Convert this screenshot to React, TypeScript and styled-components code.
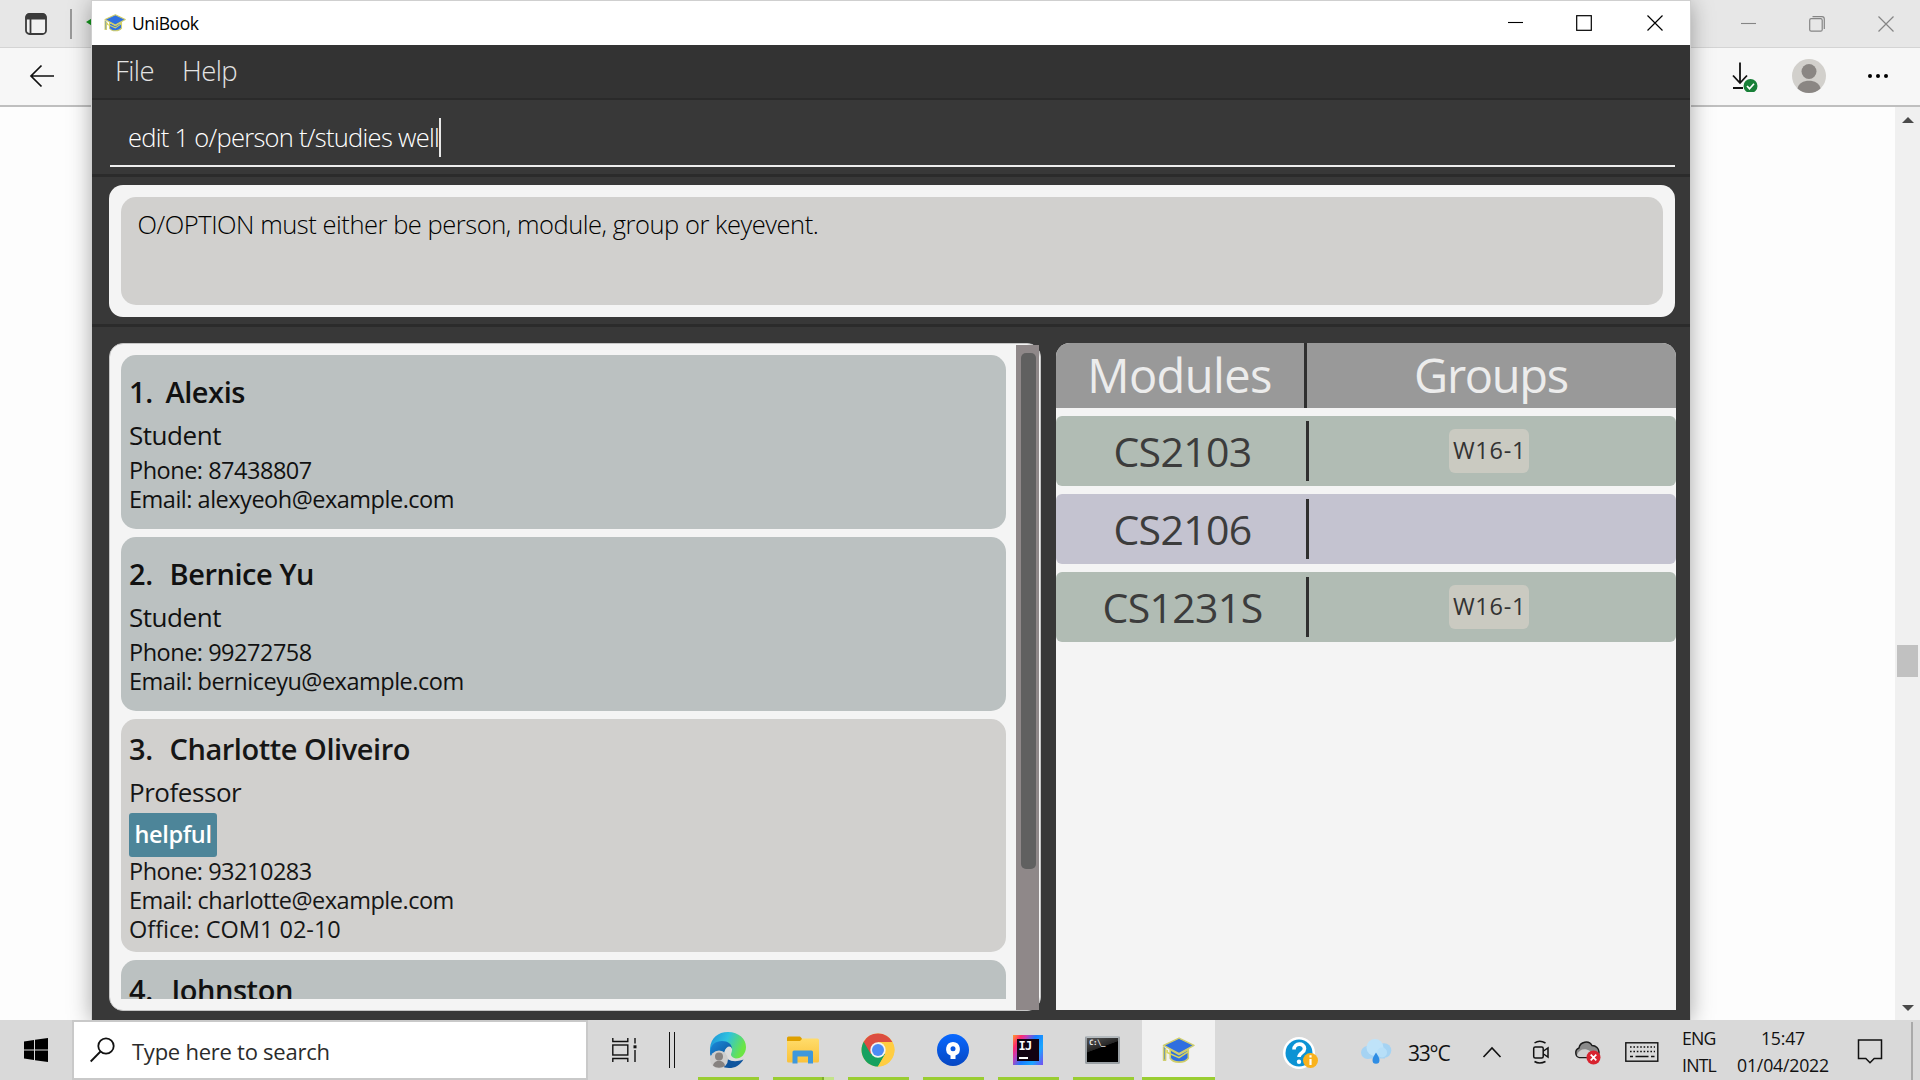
import React from 'react';
import styled, { createGlobalStyle, css } from 'styled-components';

const Global = createGlobalStyle`
  *, *::before, *::after { box-sizing: border-box; }
  html, body { margin: 0; padding: 0; overflow: hidden; }
  body { font-family: 'Open Sans', 'Noto Sans', sans-serif; color: #111; }
  svg { display: block; flex: none; }
`;

const Desktop = styled.div`
  position: relative;
  width: 1920px;
  height: 1080px;
  display: flex;
  flex-direction: column;
  overflow: hidden;
`;

/* ---------- browser behind the window ---------- */

const Browser = styled.div`
  height: 1020px;
  display: flex;
  flex-direction: column;
  background: #fdfdfd;
`;
const BrowserTabs = styled.div`
  height: 48px;
  padding: 0 26px 0 24px;
  display: flex;
  justify-content: space-between;
  align-items: center;
  background: #e7e7e7;
  border-bottom: 1px solid #d4d4d4;
`;
const BrowserTools = styled.div`
  height: 59px;
  padding: 0 31px 2px 29px;
  display: flex;
  justify-content: space-between;
  align-items: center;
  background: #f7f7f7;
  border-bottom: 2px solid #bfbfbf;
`;
const Cluster = styled.div<{ $gap: number }>`
  display: flex;
  align-items: center;
  gap: ${p => p.$gap}px;
`;
const TabDivider = styled.div`
  width: 2px;
  height: 30px;
  background: #999;
`;
const BrowserPage = styled.div`
  flex: 1;
  display: flex;
  justify-content: flex-end;
`;
const PageScroll = styled.div`
  width: 25px;
  padding: 10px 2px 9px;
  display: flex;
  flex-direction: column;
  align-items: center;
  background: #f0f0f0;
`;
const PageThumb = styled.div`
  width: 21px;
  height: 32px;
  margin: 522px 0 auto;
  background: #c1c1c1;
`;

/* ---------- application window ---------- */

const Window = styled.div`
  position: absolute;
  left: 92px;
  top: 1px;
  width: 1598px;
  height: 1019px;
  display: flex;
  flex-direction: column;
  background: #383838;
  box-shadow: 0 0 0 1px #cfcfcf, 0 2px 22px rgba(0, 0, 0, 0.36);
  clip-path: inset(-1px -40px 0 -40px);
`;
const TitleBar = styled.div`
  height: 44px;
  padding: 0 27px 0 12px;
  display: flex;
  align-items: center;
  background: #fff;
`;
const Title = styled.div`
  flex: 1;
  margin-left: 6px;
  font-size: 17.5px;
  line-height: 44px;
  letter-spacing: -0.42px;
  color: #000;
`;
const MenuBar = styled.div`
  height: 55px;
  padding-left: 23px;
  display: flex;
  gap: 28px;
  background: #333;
  border-bottom: 2px solid #2a2a2a;
`;
const MenuItem = styled.div`
  font-size: 27.5px;
  font-weight: 300;
  line-height: 52px;
  letter-spacing: -0.6px;
  color: #e4e4e4;
`;
const CommandArea = styled.div`
  height: 77px;
  padding: 0 15px 0 18px;
  border-bottom: 3px solid #2b2b2b;
`;
const CommandInput = styled.div`
  height: 67px;
  padding: 10px 0 0 18px;
  display: flex;
  align-items: flex-start;
  border-bottom: 2px solid #eee;
  font-size: 25.5px;
  font-weight: 300;
  line-height: 55px;
  letter-spacing: -0.72px;
  color: #fff;
`;
const Caret = styled.div`
  width: 2px;
  height: 39px;
  margin-top: 8px;
  background: #e8e8e8;
`;
const ResultArea = styled.div`
  height: 150px;
  padding: 8px 15px 7px 17px;
  border-bottom: 3px solid #2b2b2b;
`;
const ResultBox = styled.div`
  height: 132px;
  padding: 12px;
  border-radius: 14px;
  background: #f4f4f4;
`;
const ResultText = styled.div`
  height: 108px;
  padding-left: 16.5px;
  border-radius: 15px;
  background: #d1d0ce;
  font-size: 25.5px;
  font-weight: 300;
  line-height: 54px;
  letter-spacing: -0.465px;
  color: #000;
`;
const Content = styled.div`
  flex: 1;
  min-height: 0;
  padding: 16px 14px 9px 17px;
  display: flex;
  gap: 15px;
`;
const ListPanel = styled.div`
  width: 932px;
  height: 668px;
  padding-left: 11px;
  display: flex;
  gap: 10px;
  background: #f4f4f4;
  border: 1px solid #c6c6c6;
  border-radius: 14px;
`;
const ListView = styled.div`
  width: 885px;
  height: 644px;
  margin-top: 11px;
  display: flex;
  flex-direction: column;
  gap: 8px;
  overflow: hidden;
`;
const ListTrack = styled.div`
  width: 23px;
  height: 665px;
  margin-top: 1px;
  padding: 8px 3px 0 5px;
  background: #8f8889;
`;
const ListThumb = styled.div`
  height: 516px;
  border-radius: 5px;
  background: #606060;
`;
const Card = styled.div<{ $kind: 'student' | 'professor' }>`
  flex: none;
  height: ${p => (p.$kind === 'student' ? 174 : 233)}px;
  padding: ${p => (p.$kind === 'student' ? 14 : 7)}px 8px 0;
  border-radius: 15px;
  background: ${p => (p.$kind === 'student' ? '#bbc1c1' : '#d1d0ce')};
  ${p => p.$kind === 'professor' && css`color: #161616;`}
`;
const Name = styled.div`
  display: flex;
  font-size: 29px;
  font-weight: 600;
  line-height: 46px;
  letter-spacing: -0.45px;
`;
const Index = styled.span<{ $width: number }>`
  width: ${p => p.$width}px;
`;
const Role = styled.div`
  font-size: 26px;
  line-height: 41px;
  letter-spacing: -0.45px;
`;
const Line = styled.div<{ $wide: boolean }>`
  font-size: 23.5px;
  line-height: 29px;
  letter-spacing: ${p => (p.$wide ? 0 : -0.49)}px;
`;
const Tag = styled.div`
  width: 88px;
  height: 44px;
  border-radius: 3px;
  background: #4d8599;
  color: #fff;
  font-size: 23.5px;
  font-weight: 600;
  line-height: 43px;
  letter-spacing: -0.35px;
  text-align: center;
`;

const ModulePanel = styled.div`
  width: 620px;
  height: 667px;
  display: flex;
  flex-direction: column;
  gap: 8px;
  background: #f4f4f4;
  border-radius: 14px 14px 0 0;
  overflow: hidden;
`;
const ModuleHeader = styled.div`
  height: 65px;
  display: grid;
  grid-template-columns: 248px 3px 1fr;
  background: #999;
`;
const HeaderCell = styled.div<{ $spacing: number }>`
  padding-right: 1px;
  font-size: 47px;
  line-height: 65px;
  letter-spacing: ${p => p.$spacing}px;
  text-align: center;
  color: #ececec;
  & + & { padding-right: 4px; }
`;
const Rule = styled.div`
  background: #2f2f2f;
`;
const ModuleRow = styled.div<{ $alt?: boolean }>`
  height: 70px;
  display: grid;
  grid-template-columns: 250px 3px 1fr;
  align-items: center;
  border-radius: 6px;
  background: ${p => (p.$alt ? '#c4c3d0' : '#b1bcb4')};
  ${Rule} { height: 60px; }
`;
const ModuleName = styled.div`
  padding-left: 3px;
  font-size: 41px;
  line-height: 70px;
  letter-spacing: -0.65px;
  text-align: center;
  color: #3c3c3c;
`;
const GroupCell = styled.div`
  padding-right: 7px;
  display: flex;
  justify-content: center;
`;
const Group = styled.div`
  width: 80px;
  height: 44px;
  padding-left: 1px;
  border-radius: 6px;
  background: #cacac1;
  font-size: 23.5px;
  line-height: 42px;
  letter-spacing: 0.7px;
  text-align: center;
  color: #333;
`;

/* ---------- taskbar ---------- */

const Taskbar = styled.div`
  position: relative;
  height: 60px;
  display: flex;
  background: #d9d9d9;
`;
const Start = styled.div`
  width: 72px;
  padding: 18px 0 0 24px;
`;
const Search = styled.div`
  width: 516px;
  padding: 0 0 0 16px;
  display: flex;
  gap: 17px;
  background: #fff;
  border: 2px solid #c9c9c9;
  font-size: 22px;
  line-height: 58px;
  letter-spacing: -0.25px;
  color: #2b2b2b;
  svg { margin-top: 15px; }
`;
const TaskTools = styled.div`
  width: 109px;
  padding-left: 24px;
  display: flex;
  align-items: center;
  gap: 32px;
`;
const DoubleBar = styled.div`
  width: 6px;
  height: 36px;
  border: solid #111;
  border-width: 0 1.5px;
`;
const Apps = styled.div`
  display: flex;
  gap: 14px;
  margin-left: 1px;
`;
const AppButton = styled.div<{ $active?: boolean; $stacked?: boolean }>`
  width: ${p => (p.$active ? 73 : 61)}px;
  margin-left: ${p => (p.$active ? -6 : 0)}px;
  height: 60px;
  display: flex;
  align-items: center;
  justify-content: center;
  background: ${p => (p.$active ? '#f1f1f1' : 'transparent')};
  border-bottom: 3px solid #9acd32;
  padding: 3px ${p => (p.$active ? 0 : 2)}px 0 0;
  ${p => p.$stacked && css`
    border-image: linear-gradient(90deg, #9acd32 78%, #7fae2a 78%, #7fae2a 81%, #c3e389 81%) 3;
    border-style: none none solid;
  `}
`;
const Tray = styled.div`
  margin-left: 68px;
  display: grid;
  grid-template-columns: 77px 48px 74px 50px 42px 51px 57px 53px 122px 54px 8px;
  align-items: center;
  font-size: 18px;
  color: #111;
`;
const Temp = styled.div`
  padding-top: 2px;
  font-size: 21px;
  line-height: 62px;
  letter-spacing: -1.2px;
`;
const TwoLine = styled.div<{ $width?: number; $spacing: number }>`
  width: ${p => (p.$width ? p.$width + 'px' : 'auto')};
  font-size: 17.7px;
  line-height: 27.5px;
  letter-spacing: ${p => p.$spacing}px;
  text-align: ${p => (p.$width ? 'center' : 'left')};
  white-space: nowrap;
`;
const PeekLine = styled.div`
  width: 2px;
  height: 60px;
  background: #a9a9a9;
`;

/* ---------- drawings ---------- */

const Cap = ({ w, h }: { w: number; h: number }) => (
  <svg width={w} height={h} viewBox="0 0 32 26">
    <g fill="#2f6fe0" stroke="#d0ce6c" strokeWidth="1.500" strokeLinejoin="round">
      <path d="M8 12v8.500c3 5 14 5 17.500 0V12l-9 5z" />
      <path d="M1.500 9v13.500h2V11" />
      <path d="M16.500 1 1.500 8l15 8L31 8z" />
    </g>
    <path d="M5 12.500v2.500l11.500 5 9-6" fill="none" stroke="#d8d65c" strokeWidth="1.500" />
  </svg>
);

const Cross = ({ c }: { c: string }) => (
  <svg width="16" height="16" viewBox="0 0 16 16" stroke={c} strokeWidth="1.200"><path d="M.5.5l15 15M15.500.5l-15 15" /></svg>
);
const Dash = ({ c }: { c: string }) => (
  <svg width="15" height="16" viewBox="0 0 15 16"><path d="M0 7.500h15" stroke={c} strokeWidth="1.100" /></svg>
);

const TabsIcon = () => (
  <svg width="24" height="24" viewBox="0 0 24 24">
    <rect x="2" y="2" width="20" height="20" rx="3.500" fill="#f2f2f2" stroke="#3b3b3b" strokeWidth="1.800" />
    <path d="M1.500 7.500V5a3.500 3.500 0 0 1 3.500-3.500h14A3.500 3.500 0 0 1 22.500 5v2.500z" fill="#3b3b3b" />
    <path d="M6.500 7v15" stroke="#3b3b3b" strokeWidth="1.800" />
  </svg>
);
const BackIcon = () => (
  <svg width="26" height="24" viewBox="0 0 26 24" fill="none" stroke="#111" strokeWidth="1.700"><path d="M25 12H2M12.500 1.500 2 12l10.500 10.500" /></svg>
);
const RestoreIcon = () => (
  <svg width="16" height="16" viewBox="0 0 16 16" fill="none" stroke="#858585" strokeWidth="1.200"><rect x=".7" y="2.700" width="12.500" height="12.500" rx="1.500" /><path d="M3.500.7h9.500a2.300 2.300 0 0 1 2.300 2.300v10" /></svg>
);
const DownloadIcon = () => (
  <svg width="26" height="32" viewBox="0 0 26 32" fill="none">
    <path d="M8 2.500v20.500M1 15.500l7 7.500 7-7.500M1 28h10" stroke="#111" strokeWidth="1.800" />
    <circle cx="18.500" cy="26" r="7" fill="#188038" />
    <path d="M15 26l2.500 2.700 4.500-5" stroke="#fff" strokeWidth="1.700" />
  </svg>
);
const Avatar = () => (
  <svg width="36" height="36" viewBox="0 0 36 36">
    <circle cx="18" cy="18" r="17" fill="#d2d0cc" />
    <circle cx="18" cy="13.500" r="7.500" fill="#8a8683" />
    <path d="M6.500 30.500C8 20 28 20 29.500 30.500 23 36.500 13 36.500 6.500 30.500z" fill="#8a8683" />
  </svg>
);
const Dots = () => (
  <svg width="22" height="6" viewBox="0 0 22 6"><circle cx="3" cy="3" r="2" /><circle cx="11" cy="3" r="2" /><circle cx="19" cy="3" r="2" /></svg>
);
const Arrow = ({ down }: { down?: boolean }) => (
  <svg width="12" height="6" viewBox="0 0 12 6"><path d={down ? 'M0 0h12L6 6z' : 'M0 6h12L6 0z'} fill="#4a4a4a" /></svg>
);
const LeafIcon = () => (
  <svg width="8" height="14" viewBox="0 0 8 14"><path d="M0 5 8 0v14H5.500V8.500z" fill="#13951c" /></svg>
);

const EdgeIcon = () => (
  <svg width="38" height="38" viewBox="0 0 38 38">
    <defs>
      <linearGradient id="eg" x1="0" y1="0" x2="1" y2=".35"><stop offset="0" stopColor="#1c8fd8" /><stop offset=".5" stopColor="#2fc2df" /><stop offset="1" stopColor="#6be544" /></linearGradient>
      <linearGradient id="eb" x1="0" y1="0" x2="1" y2="1"><stop offset="0" stopColor="#1b8bdc" /><stop offset="1" stopColor="#0b4f94" /></linearGradient>
    </defs>
    <path d="M1 17C2 7 9 1 19 1c11 0 18 7 18 15 0 7-5 12-11 12-4 0-6-2-5-4 3-5-1-11-8-11-6 0-11 5-12 10z" fill="url(#eg)" />
    <path d="M1 23C1 13 7 10 13 10c6 0 10 3 10 8-6-3-9 2-8 10H3z" fill="url(#eb)" />
    <path d="M15 22c2 8 10 10 19.500 6.500C31 34.500 26 37 20 37c-6 0-10-3-11-8z" fill="#0f559d" />
    <path d="M16 20c1-5 6-6 7-2 .5 3-2 5-.5 7 2 3 7 3 10 2-6 4-14 3-16-2z" fill="#dcdcdc" />
    <circle cx="10" cy="28.500" r="9" fill="#cfcecd" />
    <circle cx="10" cy="25.500" r="4" fill="#868280" />
    <path d="M4 34.500c1-6.500 11-6.500 12 0-3 3-9 3-12 0z" fill="#868280" />
  </svg>
);
const FolderIcon = () => (
  <svg width="32" height="28" viewBox="0 0 32 28">
    <defs><linearGradient id="fo" x1="0" y1="0" x2="0" y2="1"><stop offset="0" stopColor="#ffdc6b" /><stop offset="1" stopColor="#fac23a" /></linearGradient></defs>
    <path d="M0 5V2Q0 .5 1.500.5H13l2 2V5z" fill="#dfa000" />
    <path d="M0 5h13l2.500-2.500H30.500Q32 2.500 32 4V25q0 1.500-1.500 1.500h-29Q0 26.500 0 25z" fill="url(#fo)" />
    <path d="M5.500 27.500V16q0-1.500 1.500-1.500h17.500q1.500 0 1.500 1.500v11.500h-5V20.500H10.500v7z" fill="#3e98dc" />
  </svg>
);
const ChromeIcon = () => (
  <svg width="34" height="34" viewBox="0 0 34 34">
    <circle cx="17" cy="17" r="16.500" fill="#ffcd42" />
    <path d="M17 17 2.700 8.800A16.500 16.500 0 0 0 17 33.500l7.200-12.400z" fill="#16a160" />
    <path d="M17 17V9h14.400A16.500 16.500 0 0 0 2.700 8.800L9.800 21z" fill="#dc4e41" />
    <path d="M17 9h14.400a16.500 16.500 0 0 1-14.400 24.500L24.200 21z" fill="#ffcd42" />
    <circle cx="17" cy="17" r="7.700" fill="#f3f3f3" />
    <circle cx="17" cy="17" r="6" fill="#4c8bf5" />
  </svg>
);
const SourcetreeIcon = () => (
  <svg width="32" height="32" viewBox="0 0 32 32">
    <defs><linearGradient id="st" x1="0" y1="0" x2="0" y2="1"><stop offset="0" stopColor="#0868ff" /><stop offset="1" stopColor="#0747c2" /></linearGradient></defs>
    <circle cx="16" cy="16" r="16" fill="url(#st)" />
    <path d="M16 8a7 7 0 0 0-2.500 13.500V25h5v-3.500A7 7 0 0 0 16 8z" fill="#fff" />
    <circle cx="16" cy="14.800" r="2.500" fill="#0a58e0" />
  </svg>
);
const IntelliJBox = styled.div`
  width: 30px;
  height: 30px;
  padding: 4px;
  background: linear-gradient(120deg, #ff9a2e 0, #ff2d6b 18%, #c93bb5 30%, #1a7cff 50%, #19a6ff 75%, #7a4cf0 100%);
`;
const IntelliJInner = styled.div`
  width: 22px;
  height: 22px;
  padding: 1px 0 0 2px;
  background: #120312;
  color: #fff;
  font: 700 12px/13px 'DejaVu Sans Mono', monospace;
  letter-spacing: -0.8px;
  &::after {
    content: '';
    display: block;
    width: 9px;
    height: 2px;
    margin-top: 4px;
    background: #fff;
  }
`;
const Terminal = styled.div`
  width: 35px;
  height: 28px;
  padding: 1px 0 0 2px;
  border: 2px solid #9aa0a4;
  border-top-color: #b4babe;
  border-radius: 2px;
  background: linear-gradient(160deg, #555 0, #262626 40%, #000 42%);
  color: #e8e8e8;
  font: 700 7.500px/8px 'DejaVu Sans Mono', monospace;
  letter-spacing: -0.5px;
`;

const HelpIcon = () => (
  <svg width="36" height="40" viewBox="0 0 36 40">
    <circle cx="16" cy="21" r="16" fill="#fff" />
    <circle cx="16" cy="21" r="13.500" fill="#0c93d4" />
    <path d="M11 17.500c0-7 10.500-7 10.500-.8 0 4.300-5.500 4-5.500 8.300" fill="none" stroke="#fff" strokeWidth="3.600" />
    <circle cx="16" cy="29.800" r="2.200" fill="#fff" />
    <circle cx="27.500" cy="28.500" r="7.500" fill="#f9b21d" />
    <path d="M27.500 27v6M27.500 23.300v2.200" stroke="#fff" strokeWidth="2.200" />
  </svg>
);
const WeatherIcon = () => (
  <svg width="32" height="30" viewBox="0 0 32 30">
    <g fill="#a5d3f3">
      <circle cx="7.500" cy="15.500" r="6.500" />
      <circle cx="24" cy="13.500" r="7.300" />
      <path d="M7 13h18v8.500H7z" />
    </g>
    <circle cx="15" cy="10.500" r="8.500" fill="#bfe3f9" />
    <circle cx="22" cy="15.500" r="5" fill="#b7dff8" />
    <path d="M16 15.500c2 3.500 3.500 5.500 3.500 7.700a3.500 3.500 0 0 1-7 0c0-2.200 1.500-4.200 3.500-7.700z" fill="#2f8de4" />
  </svg>
);
const ChevronIcon = () => (
  <svg width="20" height="12" viewBox="0 0 20 12" fill="none" stroke="#111" strokeWidth="1.600"><path d="M1.500 11 10 2l8.500 9" /></svg>
);
const CameraIcon = () => (
  <svg width="18" height="24" viewBox="0 0 18 24" fill="none" stroke="#111" strokeWidth="1.500">
    <rect x="1.700" y="7" width="9.500" height="11" rx="1.500" /><path d="M11.500 11l4.500-3v9l-4.500-3M2.500 3q5-3.500 11 0M2.500 21.500q5 3 11 0" />
  </svg>
);
const CloudErrorIcon = () => (
  <svg width="28" height="26" viewBox="0 0 28 26">
    <path d="M5.500 18.500A5 5 0 0 1 5 9C6 2.500 15 1 18 6.500c4 0 7 3 7 6.500s-2 5.500-5 5.500z" fill="#8a8a8a" stroke="#1c1c1c" strokeWidth="1.500" />
    <path d="M3 16c2-6 8-7 13-4l4 6H5.500Q3 17.500 3 16z" fill="#cfcfcf" />
    <circle cx="19.500" cy="18.500" r="7" fill="#d8232f" />
    <path d="M16.700 15.700l5.600 5.600m0-5.600l-5.600 5.600" stroke="#fff" strokeWidth="1.700" />
  </svg>
);
const KeyboardIcon = () => (
  <svg width="34" height="20" viewBox="0 0 34 20" fill="none" stroke="#111" strokeWidth="1.400">
    <rect x=".8" y=".8" width="32" height="18.400" />
    <path d="M5 5h25M5 9.500h25" strokeDasharray="1.600 1.800" /><path d="M5 14.500h3m2.500 0h13m2.500 0h3.500" />
  </svg>
);
const NotificationIcon = () => (
  <svg width="26" height="26" viewBox="0 0 26 26" fill="none" stroke="#111" strokeWidth="1.500"><path d="M1.500 1h23v18.500h-7.300L13 23.800l-4.200-4.300H1.500z" /></svg>
);
const WindowsIcon = () => (
  <svg width="24" height="24" viewBox="0 0 24 24"><path d="M0 3.500 10 2v9.500H0zM11 1.800 24 0v11.500H11zM0 12.500h10V22L0 20.500zM11 12.500h13V24l-13-1.800z" /></svg>
);
const SearchIcon = () => (
  <svg width="25" height="26" viewBox="0 0 25 26" fill="none" stroke="#111" strokeWidth="1.800"><circle cx="16" cy="9" r="7.700" /><path d="M10.500 14.500.7 24.500" /></svg>
);
const TaskViewIcon = () => (
  <svg width="25" height="24" viewBox="0 0 25 24" fill="none" stroke="#111" strokeWidth="1.400">
    <path d="M.8 0v3.500h15V0M.8 24v-3.500h15V24" /><rect x=".8" y="7" width="15" height="10" /><path d="M23 0v5.500M23 12v12" /><path d="M21.500 8.800h3" strokeWidth="3" />
  </svg>
);

/* ---------- data ---------- */

interface Person {
  name: string;
  kind: 'student' | 'professor';
  indexWidth: number;
  tag?: string;
  lines: string[];
}
const people: Person[] = [
  { name: 'Alexis', kind: 'student', indexWidth: 36.5, lines: ['Phone: 87438807', 'Email: alexyeoh@example.com'] },
  { name: 'Bernice Yu', kind: 'student', indexWidth: 40.5, lines: ['Phone: 99272758', 'Email: berniceyu@example.com'] },
  { name: 'Charlotte Oliveiro', kind: 'professor', indexWidth: 40.5, tag: 'helpful', lines: ['Phone: 93210283', 'Email: charlotte@example.com', 'Office: COM1 02-10'] },
  { name: 'Johnston', kind: 'professor', indexWidth: 42.5, lines: [] },
];
const modules = [
  { name: 'CS2103', group: 'W16-1' },
  { name: 'CS2106', group: '' },
  { name: 'CS1231S', group: 'W16-1' },
];
const CutCard = styled(Card)`
  background: #bbc1c1;
  color: #111;
`;

export default function App() {
  return (
    <Desktop>
      <Global />
      <Browser>
        <BrowserTabs>
          <Cluster $gap={14}>
            <Cluster $gap={22}><TabsIcon /><TabDivider /></Cluster>
            <LeafIcon />
          </Cluster>
          <Cluster $gap={53}><Dash c="#858585" /><RestoreIcon /><Cross c="#858585" /></Cluster>
        </BrowserTabs>
        <BrowserTools>
          <BackIcon />
          <Cluster $gap={40}>
            <Cluster $gap={33}><DownloadIcon /><Avatar /></Cluster>
            <Dots />
          </Cluster>
        </BrowserTools>
        <BrowserPage>
          <PageScroll><Arrow /><PageThumb /><Arrow down /></PageScroll>
        </BrowserPage>
      </Browser>

      <Window>
        <TitleBar>
          <Cap w={22} h={18} />
          <Title>UniBook</Title>
          <Cluster $gap={55}>
            <Cluster $gap={53}>
              <Dash c="#000" />
              <svg width="16" height="16" viewBox="0 0 16 16" fill="none" stroke="#000" strokeWidth="1.200"><rect x=".7" y=".7" width="14.600" height="14.600" /></svg>
            </Cluster>
            <Cross c="#000" />
          </Cluster>
        </TitleBar>
        <MenuBar><MenuItem>File</MenuItem><MenuItem>Help</MenuItem></MenuBar>
        <CommandArea>
          <CommandInput>edit 1 o/person t/studies well<Caret /></CommandInput>
        </CommandArea>
        <ResultArea>
          <ResultBox><ResultText>O/OPTION must either be person, module, group or keyevent.</ResultText></ResultBox>
        </ResultArea>
        <Content>
          <ListPanel>
            <ListView>
              {people.map((p, i) => {
                const Box = p.lines.length ? Card : CutCard;
                return (
                  <Box key={p.name} $kind={p.kind}>
                    <Name><Index $width={p.indexWidth}>{i + 1}.</Index>{p.name}</Name>
                    {p.lines.length > 0 && <Role>{p.kind === 'student' ? 'Student' : 'Professor'}</Role>}
                    {p.tag && <Tag>{p.tag}</Tag>}
                    {p.lines.map(l => <Line key={l} $wide={l.startsWith('Office')}>{l}</Line>)}
                  </Box>
                );
              })}
            </ListView>
            <ListTrack><ListThumb /></ListTrack>
          </ListPanel>
          <ModulePanel>
            <ModuleHeader><HeaderCell $spacing={-0.6}>Modules</HeaderCell><Rule /><HeaderCell $spacing={-1.3}>Groups</HeaderCell></ModuleHeader>
            {modules.map((m, i) => (
              <ModuleRow key={m.name} $alt={i % 2 === 1}>
                <ModuleName>{m.name}</ModuleName>
                <Rule />
                <GroupCell>{m.group && <Group>{m.group}</Group>}</GroupCell>
              </ModuleRow>
            ))}
          </ModulePanel>
        </Content>
      </Window>

      <Taskbar>
        <Start><WindowsIcon /></Start>
        <Search><SearchIcon />Type here to search</Search>
        <TaskTools><TaskViewIcon /><DoubleBar /></TaskTools>
        <Apps>
          <AppButton><EdgeIcon /></AppButton>
          <AppButton $stacked><FolderIcon /></AppButton>
          <AppButton><ChromeIcon /></AppButton>
          <AppButton><SourcetreeIcon /></AppButton>
          <AppButton><IntelliJBox><IntelliJInner>IJ</IntelliJInner></IntelliJBox></AppButton>
          <AppButton><Terminal>C:\_</Terminal></AppButton>
          <AppButton $active><Cap w={33} h={27} /></AppButton>
        </Apps>
        <Tray>
          <HelpIcon />
          <WeatherIcon />
          <Temp>33°C</Temp>
          <ChevronIcon />
          <CameraIcon />
          <CloudErrorIcon />
          <KeyboardIcon />
          <TwoLine $spacing={-0.8}>ENG<br />INTL</TwoLine>
          <TwoLine $width={96} $spacing={-0.2}>15:47<br />01/04/2022</TwoLine>
          <NotificationIcon />
          <PeekLine />
        </Tray>
      </Taskbar>
    </Desktop>
  );
}
